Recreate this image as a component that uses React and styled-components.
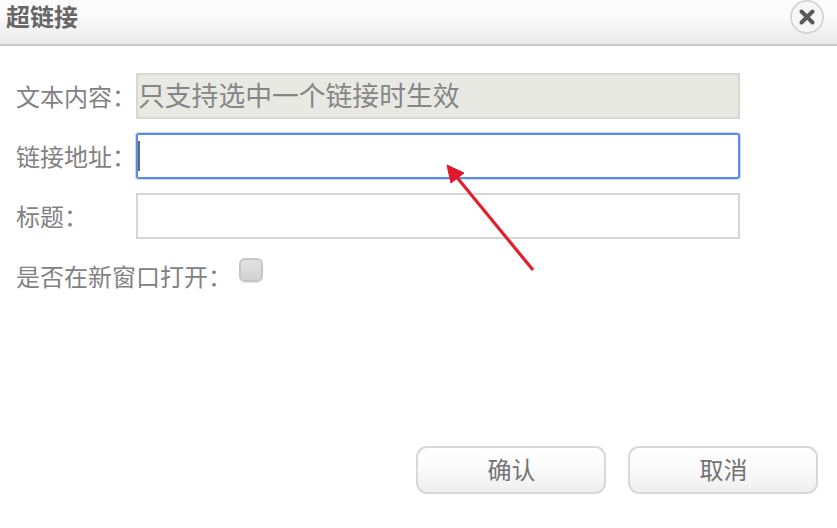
import React from "react";
import styled, { createGlobalStyle } from "styled-components";

const Global = createGlobalStyle`
  html, body { margin: 0; padding: 0; background: #fff; }
  * { box-sizing: border-box; }
`;
const Dialog = styled.div`
  position: relative;
  width: 837px;
  height: 528px;
  background: #fff;
  overflow: hidden;
  font-family: "Noto Sans CJK SC", "Liberation Sans", sans-serif;
  color: #828282;
`;
const Header = styled.div`
  height: 46px;
  display: flex;
  align-items: center;
  justify-content: space-between;
  padding: 0 13px 8px 6px;
  border-bottom: 2px solid #c9c9c9;
  background: linear-gradient(#fcfcfc 0%, #fafafa 40%, #e9e9e9 100%);
`;
const Title = styled.div`
  font-family: "Liberation Sans", "Noto Sans CJK SC", sans-serif;
  font-size: 24px;
  line-height: 32px;
  font-weight: 700;
  color: #666;
`;
const Close = styled.div`
  width: 34px;
  height: 34px;
  margin-top: -2px;
  border-radius: 50%;
  background: #f6f6f6;
  border: 2px solid #d6d6d6;
  box-shadow: inset 0 0 0 1px #fff;
  display: flex;
  align-items: center;
  justify-content: center;
`;
const Form = styled.div`
  display: flex;
  flex-direction: column;
  gap: 14px;
  padding: 27px 97px 0 16px;
`;
const Row = styled.div`
  display: flex;
  align-items: center;
  height: 46px;
`;
const Label = styled.div`
  width: 120px;
  font-size: 24px;
  line-height: 36px;
  white-space: nowrap;
`;
const Field = styled.div`
  width: 604px;
  height: 46px;
  display: flex;
  align-items: center;
  padding: 0 0 3px 0;
  font-size: 26.8px;
  white-space: nowrap;
  color: #868686;
  background: ${(p) => (p.$disabled ? "#e9e9e3" : "#fff")};
  border: 2px solid ${(p) => (p.$focus ? "#5b8ee2" : p.$disabled ? "#d8d8d2" : "#d6d6d6")};
  border-radius: ${(p) => (p.$focus ? "3px" : "0")};
  box-shadow: ${(p) => (p.$focus ? "0 0 0 1px rgba(91, 142, 226, 0.35)" : "none")};
`;
const Caret = styled.div`
  width: 2px;
  height: 30px;
  margin-top: 3px;
  background: #5d6b80;
`;
const CheckRow = styled.div`
  display: flex;
  align-items: center;
  margin-top: 5px;
  height: 36px;
`;
const CheckLabel = styled.div`
  font-size: 24px;
  line-height: 36px;
  white-space: nowrap;
  width: 223px;
`;
const Check = styled.div`
  width: 24px;
  height: 24px;
  margin-top: -12px;
  border-radius: 6px;
  border: 2px solid #c6c6c6;
  background: linear-gradient(#e2e2e2, #d2d2d2);
  box-shadow: 0 1px 1px #e6e6e6;
`;
const Footer = styled.div`
  position: absolute;
  right: 19px;
  bottom: 34px;
  display: flex;
  gap: 22px;
`;
const Button = styled.div`
  width: 190px;
  height: 48px;
  display: flex;
  align-items: center;
  justify-content: center;
  padding: 0 0 4px 1px;
  font-size: 24px;
  color: #737373;
  border: 2px solid #d8d8d8;
  border-radius: 11px;
  background: linear-gradient(#ffffff 0%, #fbfbfb 40%, #efefef 100%);
`;
const Arrow = styled.svg`
  position: absolute;
  left: 0;
  top: 0;
  pointer-events: none;
`;

export default function App() {
  return (
    <Dialog>
      <Global />
      <Header>
        <Title>超链接</Title>
        <Close>
          <svg width="18" height="18" viewBox="0 0 18 18">
            <path d="M3.5 3.5L14.5 14.5M14.5 3.5L3.5 14.5" stroke="#5a5a5a" strokeWidth="4" strokeLinecap="round" />
          </svg>
        </Close>
      </Header>
      <Form>
        <Row>
          <Label>文本内容：</Label>
          <Field $disabled>只支持选中一个链接时生效</Field>
        </Row>
        <Row>
          <Label>链接地址：</Label>
          <Field $focus><Caret /></Field>
        </Row>
        <Row>
          <Label>标题：</Label>
          <Field />
        </Row>
        <CheckRow>
          <CheckLabel>是否在新窗口打开：</CheckLabel>
          <Check />
        </CheckRow>
      </Form>
      <Footer>
        <Button>确认</Button>
        <Button>取消</Button>
      </Footer>
      <Arrow width="837" height="528" viewBox="0 0 837 528">
        <path d="M533 270L455 175" stroke="#e2202c" strokeWidth="3.2" fill="none" />
        <path d="M447 165L464 173L451 183Z" fill="#e2182a" stroke="#e2182a" strokeWidth="1" />
      </Arrow>
    </Dialog>
  );
}
